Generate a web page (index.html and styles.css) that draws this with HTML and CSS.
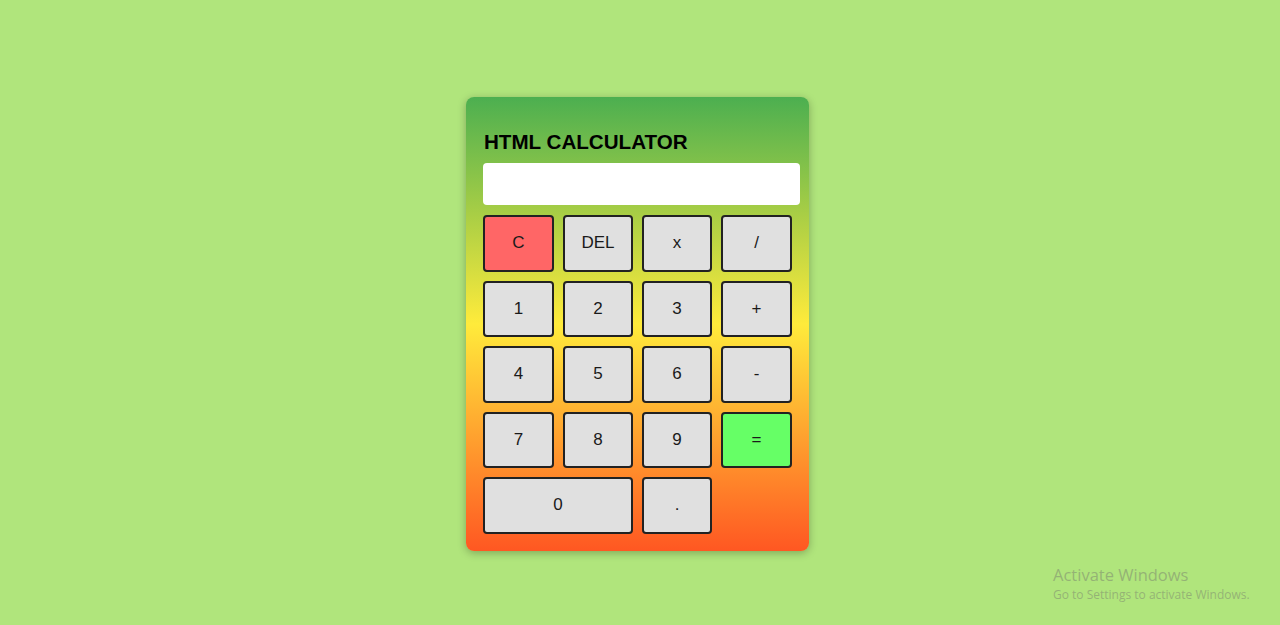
FILE: index.html
```html
<!DOCTYPE html>
<html lang="en">
<head>
<meta charset="utf-8">
<title>HTML Calculator</title>
<link rel="stylesheet" href="styles.css">
</head>
<body>
<main class="page">
  <div class="calculator">
    <h2 class="title">HTML CALCULATOR</h2>
    <input class="display" type="text" readonly>
    <div class="keys">
      <button class="key key-clear">C</button>
      <button class="key">DEL</button>
      <button class="key">x</button>
      <button class="key">/</button>
      <button class="key">1</button>
      <button class="key">2</button>
      <button class="key">3</button>
      <button class="key">+</button>
      <button class="key">4</button>
      <button class="key">5</button>
      <button class="key">6</button>
      <button class="key">-</button>
      <button class="key">7</button>
      <button class="key">8</button>
      <button class="key">9</button>
      <button class="key key-equals">=</button>
      <button class="key key-zero">0</button>
      <button class="key">.</button>
    </div>
  </div>
</main>
<div class="watermark">
  <div class="wm-title">Activate Windows</div>
  <div class="wm-sub">Go to Settings to activate Windows.</div>
</div>
</body>
</html>
```
FILE: styles.css
```css
html, body {
  margin: 0;
  padding: 0;
}

body {
  background: #b0e57c;
  height: 625px;
  overflow: hidden;
  font-family: "Liberation Sans", Arial, sans-serif;
}

.page {
  display: flex;
  justify-content: center;
  padding: 97px 5px 0 0;
}

.calculator {
  width: 317px;
  padding: 17px 9px 17px 17px;
  border-radius: 8px;
  background: linear-gradient(to bottom, #4caf50 0%, #ffeb3b 50%, #ff5722 100%);
  box-shadow: 0 2px 8px rgba(0, 0, 0, 0.28);
}

.title {
  margin: 16px 0 9px 1px;
  font-size: 20.6px;
  line-height: 24px;
  font-weight: bold;
  color: #000;
}

.display {
  display: block;
  box-sizing: border-box;
  width: 317px;
  height: 42px;
  margin: 0;
  border: none;
  border-radius: 4px;
  background: #fff;
  outline: none;
}

.keys {
  display: grid;
  width: 309px;
  grid-template-columns: 71px 70px 70px 71px;
  grid-auto-rows: 56.5px;
  column-gap: 9px;
  row-gap: 9px;
  margin-top: 10px;
}

.key {
  box-sizing: border-box;
  margin: 0;
  padding: 0;
  border: 2px solid #222;
  border-radius: 4px;
  background: #e0e0e0;
  color: #1a1a1a;
  font-family: "Liberation Sans", Arial, sans-serif;
  font-size: 17px;
}

.key-clear {
  background: #ff6666;
}

.key-equals {
  background: #66ff66;
}

.key-zero {
  grid-column: span 2;
}

.watermark {
  position: absolute;
  left: 1053px;
  top: 564px;
  font-family: "Open Sans", "Noto Sans", sans-serif;
  color: rgba(120, 128, 110, 0.5);
}

.wm-title {
  font-size: 16.5px;
  line-height: 21px;
}

.wm-sub {
  font-size: 12px;
  line-height: 17px;
  margin-top: 1px;
}
```
